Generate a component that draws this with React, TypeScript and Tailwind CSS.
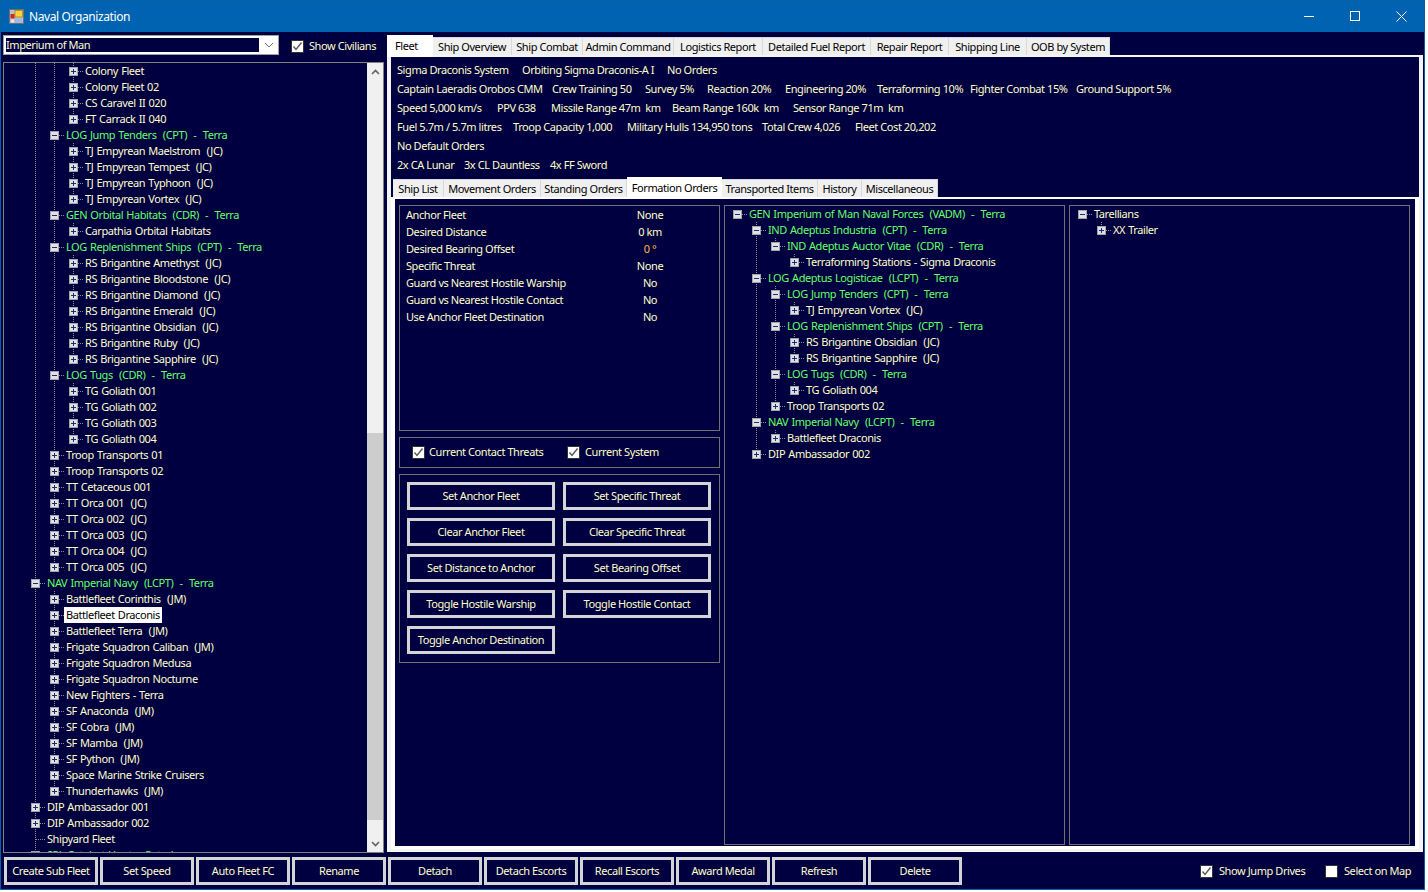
import React from "react";

type Kind = "p" | "m" | "n";
type R = [number, Kind, string, 0 | 1 | 2];

const leftRows: R[] = [
  [3, "p", "Colony Fleet", 0],
  [3, "p", "Colony Fleet 02", 0],
  [3, "p", "CS Caravel II 020", 0],
  [3, "p", "FT Carrack II 040", 0],
  [2, "m", "LOG Jump Tenders  (CPT)  -  Terra", 1],
  [3, "p", "TJ Empyrean Maelstrom  (JC)", 0],
  [3, "p", "TJ Empyrean Tempest  (JC)", 0],
  [3, "p", "TJ Empyrean Typhoon  (JC)", 0],
  [3, "p", "TJ Empyrean Vortex  (JC)", 0],
  [2, "m", "GEN Orbital Habitats  (CDR)  -  Terra", 1],
  [3, "p", "Carpathia Orbital Habitats", 0],
  [2, "m", "LOG Replenishment Ships  (CPT)  -  Terra", 1],
  [3, "p", "RS Brigantine Amethyst  (JC)", 0],
  [3, "p", "RS Brigantine Bloodstone  (JC)", 0],
  [3, "p", "RS Brigantine Diamond  (JC)", 0],
  [3, "p", "RS Brigantine Emerald  (JC)", 0],
  [3, "p", "RS Brigantine Obsidian  (JC)", 0],
  [3, "p", "RS Brigantine Ruby  (JC)", 0],
  [3, "p", "RS Brigantine Sapphire  (JC)", 0],
  [2, "m", "LOG Tugs  (CDR)  -  Terra", 1],
  [3, "p", "TG Goliath 001", 0],
  [3, "p", "TG Goliath 002", 0],
  [3, "p", "TG Goliath 003", 0],
  [3, "p", "TG Goliath 004", 0],
  [2, "p", "Troop Transports 01", 0],
  [2, "p", "Troop Transports 02", 0],
  [2, "p", "TT Cetaceous 001", 0],
  [2, "p", "TT Orca 001  (JC)", 0],
  [2, "p", "TT Orca 002  (JC)", 0],
  [2, "p", "TT Orca 003  (JC)", 0],
  [2, "p", "TT Orca 004  (JC)", 0],
  [2, "p", "TT Orca 005  (JC)", 0],
  [1, "m", "NAV Imperial Navy  (LCPT)  -  Terra", 1],
  [2, "p", "Battlefleet Corinthis  (JM)", 0],
  [2, "p", "Battlefleet Draconis", 2],
  [2, "p", "Battlefleet Terra  (JM)", 0],
  [2, "p", "Frigate Squadron Caliban  (JM)", 0],
  [2, "p", "Frigate Squadron Medusa", 0],
  [2, "p", "Frigate Squadron Nocturne", 0],
  [2, "p", "New Fighters - Terra", 0],
  [2, "p", "SF Anaconda  (JM)", 0],
  [2, "p", "SF Cobra  (JM)", 0],
  [2, "p", "SF Mamba  (JM)", 0],
  [2, "p", "SF Python  (JM)", 0],
  [2, "p", "Space Marine Strike Cruisers", 0],
  [2, "p", "Thunderhawks  (JM)", 0],
  [1, "p", "DIP Ambassador 001", 0],
  [1, "p", "DIP Ambassador 002", 0],
  [1, "n", "Shipyard Fleet", 0],
  [1, "m", "SPL Catalyst Hunter Patrol", 1],
];

const midRows: R[] = [
  [0, "m", "GEN Imperium of Man Naval Forces  (VADM)  -  Terra", 1],
  [1, "m", "IND Adeptus Industria  (CPT)  -  Terra", 1],
  [2, "m", "IND Adeptus Auctor Vitae  (CDR)  -  Terra", 1],
  [3, "p", "Terraforming Stations - Sigma Draconis", 0],
  [1, "m", "LOG Adeptus Logisticae  (LCPT)  -  Terra", 1],
  [2, "m", "LOG Jump Tenders  (CPT)  -  Terra", 1],
  [3, "p", "TJ Empyrean Vortex  (JC)", 0],
  [2, "m", "LOG Replenishment Ships  (CPT)  -  Terra", 1],
  [3, "p", "RS Brigantine Obsidian  (JC)", 0],
  [3, "p", "RS Brigantine Sapphire  (JC)", 0],
  [2, "m", "LOG Tugs  (CDR)  -  Terra", 1],
  [3, "p", "TG Goliath 004", 0],
  [2, "p", "Troop Transports 02", 0],
  [1, "m", "NAV Imperial Navy  (LCPT)  -  Terra", 1],
  [2, "p", "Battlefleet Draconis", 0],
  [1, "p", "DIP Ambassador 002", 0],
];

const rightRows: R[] = [
  [0, "m", "Tarellians", 0],
  [1, "p", "XX Trailer", 0],
];

function continues(rows: R[], i: number, level: number) {
  for (let j = i + 1; j < rows.length; j++) {
    if (rows[j][0] < level) return false;
    if (rows[j][0] === level) return true;
  }
  return false;
}

function RowGlyph({ rows, i }: { rows: R[]; i: number }) {
  const [level, kind] = rows[i];
  const cx = 12 + 19 * level;
  const w = 22 + 19 * level;
  const dot = { stroke: "#8c8c8c", strokeWidth: 1, strokeDasharray: "1 1" };
  const guides = [];
  for (let a = 1; a < level; a++) {
    if (continues(rows, i, a)) {
      const x = 12 + 19 * a + 0.5;
      guides.push(<line key={a} x1={x} x2={x} y1={0} y2={16} {...dot} />);
    }
  }
  const down = continues(rows, i, level);
  return (
    <svg width={w} height={16} className="shrink-0 block">
      {guides}
      {(level > 0 || i > 0) && <line x1={cx + 0.5} x2={cx + 0.5} y1={0} y2={8} {...dot} />}
      {down && <line x1={cx + 0.5} x2={cx + 0.5} y1={8} y2={16} {...dot} />}
      <line x1={cx + 1} x2={w} y1={8.5} y2={8.5} {...dot} />
      {kind !== "n" && (
        <g>
          <rect x={cx - 4} y={4} width={9} height={9} fill="#dfe0e8" />
          <rect x={cx - 3.5} y={4.5} width={8} height={8} fill="none" stroke="#a4a4a4" />
          <rect x={cx - 2} y={8} width={5} height={1} fill="#1c2a6e" />
          {kind === "p" && <rect x={cx} y={6} width={1} height={5} fill="#1c2a6e" />}
        </g>
      )}
    </svg>
  );
}

function Tree({ rows }: { rows: R[] }) {
  return (
    <div className="flex flex-col">
      {rows.map((r, i) => (
        <div key={i} className="flex h-4 shrink-0 items-stretch">
          <RowGlyph rows={rows} i={i} />
          <span
            className={
              "px-[2px] leading-4 whitespace-pre [word-spacing:0.7px] " +
              (r[3] === 1 ? "text-[#66ff66]" : r[3] === 2 ? "bg-white text-black" : "text-[#ffffc8]")
            }
          >
            {r[2]}
          </span>
        </div>
      ))}
    </div>
  );
}

function Check({ on = true }: { on?: boolean }) {
  return (
    <span className="w-[13px] h-[13px] shrink-0 bg-white border border-[#333333] flex items-center justify-center">
      {on && (
        <svg width="11" height="11" viewBox="0 0 11 11" fill="none">
          <path d="M1.5 5.5 L4 8.5 L9.5 1.5" stroke="#5a5a5a" strokeWidth="1.4" />
        </svg>
      )}
    </span>
  );
}

function Btn({ t, w }: { t: string; w: string }) {
  return (
    <div className={"h-[28px] border-[3px] border-[#d4d4d4] flex items-center justify-center text-[#ffffc8] whitespace-pre " + w}>
      {t}
    </div>
  );
}

const outerTabs = [
  ["Ship Overview", "w-[79px]"],
  ["Ship Combat", "w-[71px]"],
  ["Admin Command", "w-[91px]"],
  ["Logistics Report", "w-[89px]"],
  ["Detailed Fuel Report", "w-[108px]"],
  ["Repair Report", "w-[78px]"],
  ["Shipping Line", "w-[78px]"],
  ["OOB by System", "w-[83px]"],
];

const info: [string, string][][] = [
  [
    ["Sigma Draconis System", "w-[125px]"],
    ["Orbiting Sigma Draconis-A I", "w-[145px]"],
    ["No Orders", ""],
  ],
  [
    ["Captain Laeradis Orobos CMM", "w-[155px]"],
    ["Crew Training 50", "w-[93px]"],
    ["Survey 5%", "w-[62px]"],
    ["Reaction 20%", "w-[78px]"],
    ["Engineering 20%", "w-[92px]"],
    ["Terraforming 10%", "w-[93px]"],
    ["Fighter Combat 15%", "w-[106px]"],
    ["Ground Support 5%", ""],
  ],
  [
    ["Speed 5,000 km/s", "w-[100px]"],
    ["PPV 638", "w-[54px]"],
    ["Missile Range 47m  km", "w-[121px]"],
    ["Beam Range 160k  km", "w-[121px]"],
    ["Sensor Range 71m  km", ""],
  ],
  [
    ["Fuel 5.7m / 5.7m litres", "w-[116px]"],
    ["Troop Capacity 1,000", "w-[114px]"],
    ["Military Hulls 134,950 tons", "w-[135px]"],
    ["Total Crew 4,026", "w-[93px]"],
    ["Fleet Cost 20,202", ""],
  ],
  [["No Default Orders", ""]],
  [
    ["2x CA Lunar", "w-[67px]"],
    ["3x CL Dauntless", "w-[86px]"],
    ["4x FF Sword", ""],
  ],
];

const innerTabs: [string, string, boolean][] = [
  ["Ship List", "w-[51px]", false],
  ["Movement Orders", "w-[97px]", false],
  ["Standing Orders", "w-[86px]", false],
  ["Formation Orders", "w-[95px]", true],
  ["Transported Items", "w-[96px]", false],
  ["History", "w-[44px]", false],
  ["Miscellaneous", "w-[76px]", false],
];

const settings: [string, string, boolean?][] = [
  ["Anchor Fleet", "None"],
  ["Desired Distance", "0 km"],
  ["Desired Bearing Offset", "0 °", true],
  ["Specific Threat", "None"],
  ["Guard vs Nearest Hostile Warship", "No"],
  ["Guard vs Nearest Hostile Contact", "No"],
  ["Use Anchor Fleet Destination", "No"],
];

const formationButtons = [
  "Set Anchor Fleet",
  "Set Specific Threat",
  "Clear Anchor Fleet",
  "Clear Specific Threat",
  "Set Distance to Anchor",
  "Set Bearing Offset",
  "Toggle Hostile Warship",
  "Toggle Hostile Contact",
  "Toggle Anchor Destination",
];

const bottomButtons = [
  "Create Sub Fleet",
  "Set Speed",
  "Auto Fleet FC",
  "Rename",
  "Detach",
  "Detach Escorts",
  "Recall Escorts",
  "Award Medal",
  "Refresh",
  "Delete",
];

export default function App() {
  return (
    <div className="w-[1428px] h-[892px] bg-white overflow-hidden [font-family:'Liberation_Sans',Arial,sans-serif] text-[11px] tracking-[-0.42px]">
      <div className="w-[1425px] h-[890px] border border-[#0a5ea8] bg-[#000040] flex flex-col">
        {/* Title bar */}
        <div className="h-[31px] shrink-0 bg-[#0063b1] flex items-center text-white">
          <svg width="16" height="16" viewBox="0 0 16 16" className="ml-[8px]">
            <rect x="0.5" y="0.5" width="14" height="14" fill="#b9c0c8" stroke="#6b6f76" />
            <rect x="6" y="1.5" width="7.5" height="6.5" fill="#f7d23a" stroke="#a07a10" strokeWidth="0.7" />
            <rect x="1.5" y="5" width="4" height="4.5" fill="#d8261c" />
            <rect x="6" y="9.5" width="7" height="4" fill="#9db8ea" />
            <rect x="2" y="10.5" width="3" height="3" fill="#e8e8e8" />
          </svg>
          <span className="ml-[4px] [font-family:'Open_Sans',sans-serif] text-[12px] tracking-[-0.4px]">Naval Organization</span>
          <div className="ml-auto flex items-center mr-[17px] gap-[35px]">
            <svg width="11" height="11" viewBox="0 0 11 11"><line x1="0" x2="10" y1="5.5" y2="5.5" stroke="#fff" /></svg>
            <svg width="11" height="11" viewBox="0 0 11 11"><rect x="0.5" y="0.5" width="9" height="9" fill="none" stroke="#fff" /></svg>
            <svg width="11" height="11" viewBox="0 0 11 11"><path d="M0.5 0.5 L10.5 10.5 M10.5 0.5 L0.5 10.5" stroke="#fff" /></svg>
          </div>
        </div>

        {/* Main */}
        <div className="h-[822px] shrink-0 flex">
          {/* Left column */}
          <div className="w-[386px] shrink-0 pl-[2px] pr-[3px] pt-[3px] flex flex-col">
            <div className="h-[20px] flex items-center shrink-0">
              <div className="w-[276px] h-[20px] border border-[#a0a0a0] bg-white flex p-[2px] pr-0">
                <div className="w-[253px] bg-[#000040] text-[#ffffc8] leading-[14px]">Imperium of Man</div>
                <div className="flex-1 flex items-center justify-center">
                  <svg width="10" height="6" viewBox="0 0 10 6" fill="none"><path d="M1 1 L5 5 L9 1" stroke="#707070" /></svg>
                </div>
              </div>
              <div className="ml-[12px] flex items-center gap-[5px] text-[#ffffc8] mt-[3px]">
                <Check />
                <span>Show Civilians</span>
              </div>
            </div>
            <div className="mt-[7px] h-[791px] shrink-0 border border-[#808080] flex overflow-hidden">
              <div className="flex-1 overflow-hidden">
                <Tree rows={leftRows} />
              </div>
              <div className="w-[16px] shrink-0 bg-[#f0f0f0] flex flex-col">
                <div className="h-[17px] shrink-0 flex items-center justify-center">
                  <svg width="9" height="6" viewBox="0 0 9 6" fill="none"><path d="M1 5 L4.5 1.5 L8 5" stroke="#606060" strokeWidth="1.6" /></svg>
                </div>
                <div className="flex-1 flex flex-col">
                  <div className="h-[353px] shrink-0" />
                  <div className="h-[387px] shrink-0 bg-[#cdcdcd]" />
                </div>
                <div className="h-[17px] shrink-0 flex items-center justify-center">
                  <svg width="9" height="6" viewBox="0 0 9 6" fill="none"><path d="M1 1 L4.5 4.5 L8 1" stroke="#606060" strokeWidth="1.6" /></svg>
                </div>
              </div>
            </div>
          </div>

          {/* Right column */}
          <div className="flex-1 pt-[3px] pr-[1px] flex flex-col min-w-0">
            <div className="h-[20px] shrink-0 flex items-end">
              <div className="w-[46px] h-[22px] -mb-[2px] z-10 bg-white text-black flex items-start justify-start pl-[8px] pt-[3px]">Fleet</div>
              {outerTabs.map(([t, w]) => (
                <div key={t} className={"h-[18px] pt-[1px] bg-[#f0f0f0] border-r border-t border-[#d9d9d9] text-black flex items-center justify-center whitespace-pre " + w}>
                  {t}
                </div>
              ))}
            </div>
            <div className="h-[797px] shrink-0 border-x-4 border-t-2 border-b-[3px] border-[#f4f4f4] flex flex-col">
              <div className="h-[120px] shrink-0 pt-[4px] pl-[6px] text-[#ffffc8]">
                {info.map((row, i) => (
                  <div key={i} className="h-[19px] flex items-center whitespace-pre">
                    {row.map(([t, w]) => (
                      <span key={t} className={"shrink-0 " + w}>{t}</span>
                    ))}
                  </div>
                ))}
              </div>
              <div className="h-[20px] shrink-0 flex items-end pl-[2px]">
                {innerTabs.map(([t, w, on]) => (
                  <div
                    key={t}
                    className={
                      on
                        ? "h-[22px] -mb-[2px] z-10 bg-white text-black flex items-start justify-center pt-[3px] whitespace-pre " + w
                        : "h-[18px] pt-[1px] bg-[#f0f0f0] border-r border-t border-[#d9d9d9] text-black flex items-center justify-center whitespace-pre " + w
                    }
                  >
                    {t}
                  </div>
                ))}
              </div>
              <div className="flex-1 min-h-0 border-x-4 border-t-2 border-b-[3px] border-white pt-[6px] pl-[4px] flex gap-[4px] items-start">
                <div className="w-[321px] shrink-0 flex flex-col gap-[6px]">
                  <div className="h-[226px] border border-[#707070] pt-[1px] pl-[6px] text-[#ffffc8]">
                    {settings.map(([l, v, hot]) => (
                      <div key={l} className="h-[17px] flex items-center">
                        <span className="w-[214px] shrink-0">{l}</span>
                        <span className={"w-[60px] text-center " + (hot ? "text-[#ffb84d]" : "")}>{v}</span>
                      </div>
                    ))}
                  </div>
                  <div className="h-[31px] border border-[#707070] flex items-center pl-[12px] text-[#ffffc8]">
                    <div className="w-[155px] flex items-center gap-[4px]">
                      <Check />
                      <span>Current Contact Threats</span>
                    </div>
                    <div className="flex items-center gap-[5px]">
                      <Check />
                      <span>Current System</span>
                    </div>
                  </div>
                  <div className="h-[189px] border border-[#707070] pt-[7px] pl-[7px] grid grid-cols-[148px_148px] auto-rows-[28px] gap-x-[8px] gap-y-[8px] content-start">
                    {formationButtons.map((t) => (
                      <Btn key={t} t={t} w="" />
                    ))}
                  </div>
                </div>
                <div className="w-[341px] h-[640px] shrink-0 border border-[#707070]">
                  <Tree rows={midRows} />
                </div>
                <div className="w-[341px] h-[640px] shrink-0 border border-[#707070]">
                  <Tree rows={rightRows} />
                </div>
              </div>
            </div>
          </div>
        </div>

        {/* Bottom bar */}
        <div className="flex-1 pl-[3px] pt-[3px] flex items-start text-[#ffffc8]">
          <div className="flex gap-[2px]">
            {bottomButtons.map((t) => (
              <Btn key={t} t={t} w="w-[94px]" />
            ))}
          </div>
          <div className="ml-[238px] h-[28px] flex items-center">
            <div className="flex items-center gap-[6px] w-[125px]">
              <Check />
              <span>Show Jump Drives</span>
            </div>
            <div className="flex items-center gap-[6px]">
              <Check on={false} />
              <span>Select on Map</span>
            </div>
          </div>
        </div>
      </div>
    </div>
  );
}
